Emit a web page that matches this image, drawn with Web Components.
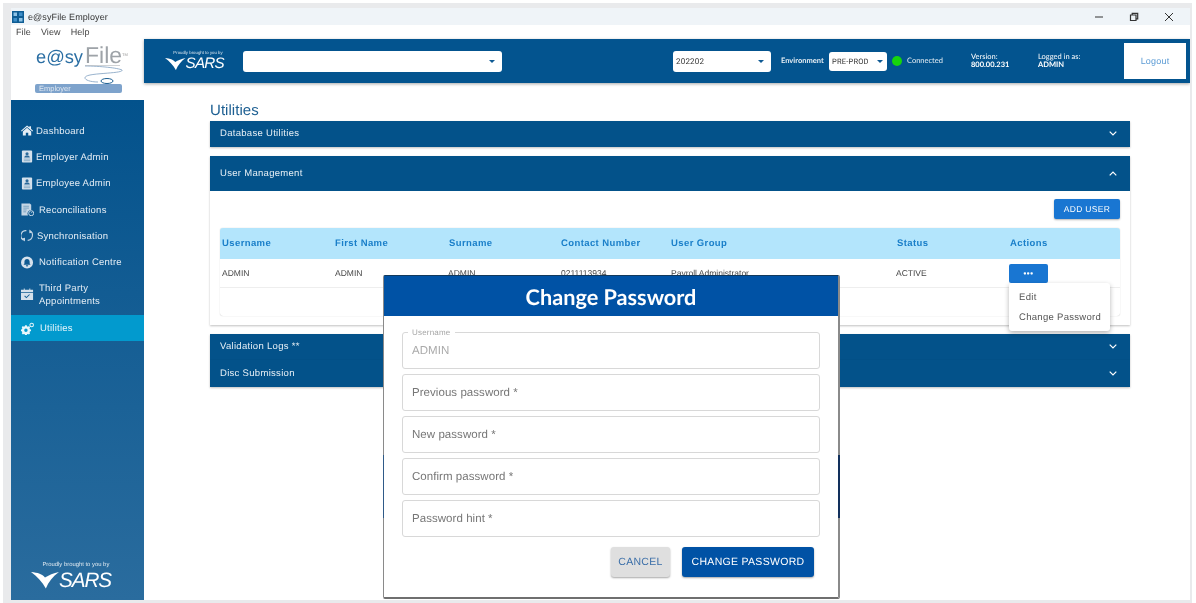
<!DOCTYPE html>
<html>
<head>
<meta charset="utf-8">
<title>e@syFile Employer</title>
<style>
    html, body { margin: 0; height: 603px; overflow: hidden; background: #fff; font-family: "Liberation Sans", Arial, sans-serif; text-rendering: geometricPrecision; }
</style>
</head>
<body>
<app-frame>
    <title-bar slot="title"></title-bar>
    <menu-bar slot="menu"></menu-bar>
    <app-logo slot="logo"></app-logo>
    <side-nav slot="nav">
        <nav-item icon="home" gap="2">Dashboard</nav-item>
        <nav-item icon="badge" gap="2">Employer Admin</nav-item>
        <nav-item icon="badge" gap="2">Employee Admin</nav-item>
        <nav-item icon="recon" gap="5">Reconciliations</nav-item>
        <nav-item icon="sync" gap="3">Synchronisation</nav-item>
        <nav-item icon="bell" gap="5">Notification Centre</nav-item>
        <nav-item icon="calendar" gap="5" tall>Third Party<br>Appointments</nav-item>
        <nav-item icon="gears" gap="6" active>Utilities</nav-item>
    </side-nav>
    <top-header slot="header"></top-header>
    <utilities-page slot="page"></utilities-page>
    <password-dialog slot="dialog"></password-dialog>
</app-frame>

<script>
const ICONS = {
    home: '<path d="M6.500 1 0 6.800l.7.8L6.500 2.600l5.800 5 .7-.8-2.200-2.100V1.800H9v1.300z"/><path d="M6.500 3.600 2 7.500V12h3.200V8.800h2.600V12H11V7.500z"/>',
    badge: '<rect x="1" y="0" width="11" height="13" rx="1" fill="#d5e1ec"/><circle cx="6.500" cy="3.500" r="1.700" fill="#2b6a9b"/><path d="M3.500 7.500c0-1.500 1.300-2.200 3-2.200s3 .7 3 2.200z" fill="#2b6a9b"/><path d="M3 9.300h7M3 11h7" stroke="#7fa6c4" stroke-width=".9"/>',
    recon: '<path d="M.5 0h9l1.500 1.500V7a4 4 0 0 0-3.500 6H.5z" fill="#c5d6e5"/><path d="M2.500 3h6M2.500 5h6M2.500 7h3.500M2.500 9h3" stroke="#6f9abb" stroke-width=".9"/><circle cx="11" cy="10.500" r="2.700" fill="none" stroke="currentColor" stroke-width=".9"/><path d="M11 10.500 12.200 9" stroke="currentColor" stroke-width=".8"/>',
    sync: '<g fill="none" stroke="#c5d6e5" stroke-width="1.200"><path d="M2.900 11.700A5.500 5.500 0 0 1 5.800 1.300"/><path d="M9.500 1.500A5.500 5.500 0 0 1 7.200 11.800"/></g><path d="M9 0v4l3.400-.7zM4.300 13V9L.9 9.700z" fill="#c5d6e5"/>',
    bell: '<path fill-rule="evenodd" d="M6.500 0a6.500 6.500 0 1 0 0 13 6.500 6.500 0 0 0 0-13zM6.500 2.800c1.700 0 2.800 1.300 2.800 3v1.700l1 1.300H2.700l1-1.300V5.800c0-1.700 1.100-3 2.800-3zM5.200 9.500h2.600a1.300 1.300 0 0 1-2.600 0z" fill="#d5e1ec"/>',
    calendar: '<path d="M3 0h1v1.500h5V0h1v1.500h3V4H0V1.500h3z" fill="#d5e1ec"/><path fill-rule="evenodd" d="M0 4.800h13V12.500H0zM3.500 8.300l.8-.7 1.500 1.500 3-3 .8.800-3.800 3.700z" fill="#d5e1ec"/>',
    gears: '<path fill-rule="evenodd" d="M4.400 4.400h1.800l.3 1.200 1 .4 1.100-.6 1.200 1.300-.6 1 .4 1 1.200.3v1.800l-1.200.3-.4 1 .6 1-1.200 1.300-1.100-.6-1 .4-.3 1.200H4.400l-.3-1.200-1-.4-1.100.6L.8 13.100l.6-1-.4-1-1-.3V9l1-.3.4-1-.6-1L2 5.400l1.100.6 1-.4zM5.300 8a1.800 1.800 0 1 0 0 3.700 1.800 1.800 0 0 0 0-3.700z" transform="translate(0 -1.500)"/><circle cx="11.500" cy="2.800" r="1.900" fill="none" stroke="currentColor" stroke-width="1.100"/>'
};

const CHEVRON_DOWN = '<svg width="8" height="5" viewBox="0 0 8 5"><path d="M.7.7 4 4l3.300-3.300" fill="none" stroke="#fff" stroke-width="1.200"/></svg>';
const CHEVRON_UP = '<svg width="8" height="5" viewBox="0 0 8 5"><path d="M.7 4.300 4 1l3.300 3.300" fill="none" stroke="#fff" stroke-width="1.200"/></svg>';

class AppFrame extends HTMLElement {
    constructor() {
        super();
        this.attachShadow({ mode: "open" }).innerHTML = `
            <style>
                :host {
                    display: block;
                    box-sizing: border-box;
                    height: 600px;
                    margin: 3px 4px 0 3px;
                    padding: 5px 2px 0 8px;
                    background: #e9eaec;
                    filter: blur(.3px);
                }
                .window {
                    position: relative;
                    height: 592px;
                    display: grid;
                    grid-template-columns: 133px 1fr;
                    grid-template-rows: 17px 13px 62px 1fr;
                    background: #fff;
                    overflow: hidden;
                }
                .wide { grid-column: 1 / 3; }
                .logo { grid-column: 1; grid-row: 3; }
                .nav { grid-column: 1; grid-row: 4; }
                .main { grid-column: 2; grid-row: 3 / 5; min-width: 0; display: flex; flex-direction: column; }
                ::slotted([slot="dialog"]) { position: absolute; left: 372px; top: 267px; }
            </style>
            <div class="window">
                <div class="wide"><slot name="title"></slot></div>
                <div class="wide"><slot name="menu"></slot></div>
                <div class="logo"><slot name="logo"></slot></div>
                <div class="nav"><slot name="nav"></slot></div>
                <div class="main">
                    <slot name="header"></slot>
                    <slot name="page"></slot>
                </div>
                <slot name="dialog"></slot>
            </div>
        `;
    }
}

class TitleBar extends HTMLElement {
    constructor() {
        super();
        this.attachShadow({ mode: "open" }).innerHTML = `
            <style>
                :host {
                    display: flex;
                    align-items: center;
                    height: 17px;
                    padding-left: 1px;
                    background: #eff4f8;
                    font: 9px "Liberation Sans", sans-serif;
                    color: #333;
                    letter-spacing: .1px;
                }
                svg { margin-right: 4px; }
                .controls { margin-left: auto; display: flex; gap: 25px; padding-right: 16px; align-items: center; }
            </style>
            <svg width="12" height="12" viewBox="0 0 12 12">
                <rect width="12" height="12" fill="#0f5d94"/>
                <rect x="1.500" y="1.500" width="3.500" height="3.500" fill="#8fc3e6"/>
                <rect x="7" y="1.500" width="3.500" height="3.500" fill="#3f8fca"/>
                <rect x="1.500" y="7" width="3.500" height="3.500" fill="#3f8fca"/>
                <rect x="7" y="7" width="3.500" height="3.500" fill="#8fc3e6"/>
            </svg>
            <span>e@syFile Employer</span>
            <div class="controls">
                <svg width="10" height="10" viewBox="0 0 10 10" style="margin:0"><path d="M1 5h8" stroke="#333" stroke-width="1"/></svg>
                <svg width="10" height="10" viewBox="0 0 10 10" style="margin:0"><path d="M1.500 3h5.500v5.500H1.500zM3.200 2.800V1.300h5.500v5.500H7" fill="none" stroke="#333" stroke-width="1.200"/></svg>
                <svg width="10" height="10" viewBox="0 0 10 10" style="margin:0"><path d="M1 1l8 8M9 1l-8 8" stroke="#333" stroke-width="1"/></svg>
            </div>
        `;
    }
}

class MenuBar extends HTMLElement {
    constructor() {
        super();
        this.attachShadow({ mode: "open" }).innerHTML = `
            <style>
                :host {
                    display: flex;
                    gap: 10px;
                    height: 13px;
                    padding-left: 5px;
                    align-items: center;
                    font: 9px "Liberation Sans", sans-serif;
                    color: #444;
                    letter-spacing: .1px;
                }
            </style>
            <span>File</span><span>View</span><span>Help</span>
        `;
    }
}

class SarsLogo extends HTMLElement {
    constructor() {
        super();
        const size = Number(this.getAttribute("size") || 16);
        this.attachShadow({ mode: "open" }).innerHTML = `
            <style>
                :host { display: inline-block; color: #fff; line-height: 1; text-align: left; }
                .by { font: ${size * .285}px "Liberation Sans", sans-serif; opacity: .85; display: block; white-space: nowrap; padding-left: ${size * .55}px; }
                .row { display: flex; align-items: center; margin-top: ${size * .05}px; }
                svg { width: ${size * 1.35}px; height: ${size * .8}px; flex: none; }
                .name { font: italic ${size}px "Liberation Sans", sans-serif; letter-spacing: ${size * -.05}px; }
            </style>
            <span class="by">Proudly brought to you by</span>
            <div class="row">
                <svg viewBox="0 0 32 15" preserveAspectRatio="none"><path d="M0 0C8 .5 13 2 16 5 20 3 26 1 32 0 25 4 20 9 17 15 13 9 7 4 0 0Z" fill="#fff"/></svg>
                <span class="name">SARS</span>
            </div>
        `;
    }
}

class AppLogo extends HTMLElement {
    constructor() {
        super();
        this.attachShadow({ mode: "open" }).innerHTML = `
            <style>
                :host {
                    display: block;
                    height: 62px;
                    padding: 7px 0 0 24px;
                    box-sizing: border-box;
                    font-family: "Liberation Sans", sans-serif;
                }
                .name { display: flex; align-items: baseline; height: 20px; line-height: 20px; padding-left: 1px; }
                .easy { font-size: 18.300px; color: #2a6ea3; }
                .file { font-size: 23px; color: #9ea3a8; margin-left: 2px; }
                .tm { font-size: 4px; color: #999; align-self: flex-start; }
                svg { display: block; margin: 0 0 -1px 45px; }
                .pill {
                    width: 87px;
                    height: 9px;
                    background: #7ea3cc;
                    border-radius: 2px;
                    font-size: 7.500px;
                    line-height: 10px;
                    color: #dfe7f0;
                    padding-left: 4px;
                    box-sizing: border-box;
                }
            </style>
            <div class="name"><span class="easy">e@sy</span><span class="file">File</span><span class="tm">TM</span></div>
            <svg width="48" height="20" viewBox="0 0 48 20" fill="none">
                <path d="M5 1C20 1 38 3 42 5 44 8 20 8 10 10 0 12 6 17 18 17" stroke="#7f9fc0" stroke-width=".8"/>
                <path d="M5 0H40" stroke="#a3a8ac" stroke-width="1"/>
                <ellipse cx="27" cy="16" rx="6" ry="2.500" stroke="#1d5f92" stroke-width="1"/>
            </svg>
            <div class="pill">Employer</div>
        `;
    }
}

class SideNav extends HTMLElement {
    constructor() {
        super();
        this.attachShadow({ mode: "open" }).innerHTML = `
            <style>
                :host {
                    display: flex;
                    flex-direction: column;
                    height: 500px;
                    box-sizing: border-box;
                    padding-top: 17.500px;
                    background: linear-gradient(#03528c, #2a6c9e);
                }
                .foot { margin-top: auto; padding: 0 0 6px 20px; }
            </style>
            <slot></slot>
            <div class="foot"><sars-logo size="20.700"></sars-logo></div>
        `;
    }
}

class NavItem extends HTMLElement {
    constructor() {
        super();
        const icon = ICONS[this.getAttribute("icon")];
        const gap = this.getAttribute("gap") || 4;
        this.attachShadow({ mode: "open" }).innerHTML = `
            <style>
                :host {
                    display: flex;
                    align-items: center;
                    gap: ${gap}px;
                    height: 26.300px;
                    padding-left: 10px;
                    color: #e4edf5;
                    font: 9.500px/13px "Liberation Sans", sans-serif;
                    letter-spacing: .25px;
                }
                :host([tall]) { height: 40px; padding-bottom: 2px; box-sizing: border-box; }
                :host([active]) { background: #029ace; color: #e8f6fb; height: 26px; }
                span { padding-top: 1px; }
                svg { width: 13px; height: 13px; fill: currentColor; flex: none; }
            </style>
            <svg viewBox="0 0 14 13">${icon}</svg>
            <span><slot></slot></span>
        `;
    }
}

class SelectBox extends HTMLElement {
    constructor() {
        super();
        this.attachShadow({ mode: "open" }).innerHTML = `
            <style>
                :host {
                    display: flex;
                    align-items: center;
                    justify-content: space-between;
                    box-sizing: border-box;
                    height: 21px;
                    padding: 0 7px 0 3px;
                    background: #fff;
                    border-radius: 3px;
                    color: #333;
                    font: 8px "Roboto", "Liberation Sans", sans-serif;
                    letter-spacing: .2px;
                }
                i { width: 0; height: 0; border: 3px solid transparent; border-top: 3px solid #0f5a94; border-bottom: 0; }
            </style>
            <span><slot></slot></span><i></i>
        `;
    }
}

class TopHeader extends HTMLElement {
    constructor() {
        super();
        this.attachShadow({ mode: "open" }).innerHTML = `
            <style>
                :host {
                    display: flex;
                    align-items: center;
                    height: 44px;
                    margin-top: 1px;
                    flex: none;
                    background: #03548f;
                    color: #fff;
                    box-shadow: 0 1px 3px rgba(0,0,0,.35);
                    font: 7.500px/8px "Lato", "Liberation Sans", sans-serif;
                    position: relative;
                }
                sars-logo { margin-left: 21px; width: 58px; flex: none; }
                .search { width: 259px; margin-left: 20px; }
                .period { width: 98px; margin-left: 171px; }
                .env { margin-left: 10px; font-weight: bold; opacity: .9; width: 44px; white-space: nowrap; }
                .envsel { width: 58px; height: 19px; margin-left: 4px; font-size: 7.500px; padding-right: 4px; }
                .dot { width: 10px; height: 10px; border-radius: 50%; background: #17d40c; margin-left: 5px; }
                .conn { margin-left: 5px; opacity: .9; width: 35px; white-space: nowrap; }
                .ver { margin-left: 29px; width: 67px; }
                .who { width: 86px; }
                b { display: block; }
                .logout {
                    width: 62px;
                    height: 36px;
                    background: #fff;
                    color: #5b9bd5;
                    font: 9px/36px "Liberation Sans", sans-serif;
                    text-align: center;
                    letter-spacing: .2px;
                }
            </style>
            <sars-logo size="15.200"></sars-logo>
            <select-box class="search"></select-box>
            <select-box class="period">202202</select-box>
            <span class="env">Environment</span>
            <select-box class="envsel">PRE-PROD</select-box>
            <span class="dot"></span>
            <span class="conn">Connected</span>
            <div class="ver">Version:<b>800.00.231</b></div>
            <div class="who">Logged in as:<b>ADMIN</b></div>
            <div class="logout">Logout</div>
        `;
    }
}

class AccordionPanel extends HTMLElement {
    constructor() {
        super();
        const height = this.getAttribute("height") || 26;
        const open = this.hasAttribute("open");
        this.attachShadow({ mode: "open" }).innerHTML = `
            <style>
                :host {
                    display: block;
                    box-shadow: 0 1px 2px rgba(0,0,0,.25);
                    background: #fff;
                }
                .head {
                    display: flex;
                    align-items: center;
                    justify-content: space-between;
                    height: ${height}px;
                    padding: 0 13px 1px 10px;
                    box-sizing: border-box;
                    background: #03528a;
                    color: #e8f0f6;
                    font: 9.500px "Liberation Sans", sans-serif;
                    letter-spacing: .3px;
                }
            </style>
            <div class="head"><span>${this.getAttribute("title")}</span>${open ? CHEVRON_UP : CHEVRON_DOWN}</div>
            <slot></slot>
        `;
    }
}

class ActionMenu extends HTMLElement {
    constructor() {
        super();
        this.attachShadow({ mode: "open" }).innerHTML = `
            <style>
                :host { display: block; position: relative; width: 39px; height: 19px; margin-left: -1px; }
                .btn {
                    height: 19px;
                    background: #1976d2;
                    border-radius: 2px;
                    color: #fff;
                    font: bold 8px/19px "Liberation Sans", sans-serif;
                    text-align: center;
                    letter-spacing: .5px;
                }
                .menu {
                    position: absolute;
                    left: 0;
                    top: 19px;
                    width: 101px;
                    height: 48px;
                    box-sizing: border-box;
                    padding-top: 5px;
                    background: #fff;
                    border-radius: 3px;
                    box-shadow: 0 2px 5px rgba(0,0,0,.3);
                    color: #555;
                    font: 9.500px/20px "Liberation Sans", sans-serif;
                    letter-spacing: .3px;
                    z-index: 2;
                }
                .menu div { padding-left: 10px; white-space: nowrap; }
            </style>
            <div class="btn">•••</div>
            <div class="menu"><div>Edit</div><div>Change Password</div></div>
        `;
    }
}

class UserTable extends HTMLElement {
    constructor() {
        super();
        this.attachShadow({ mode: "open" }).innerHTML = `
            <style>
                :host {
                    display: block;
                    border-radius: 3px;
                    box-shadow: 0 0 1px rgba(0,0,0,.3);
                    font-family: "Liberation Sans", sans-serif;
                }
                .row {
                    display: grid;
                    grid-template-columns: 113px 114px 112px 110px 226px 113px 1fr;
                    align-items: center;
                    padding-left: 2px;
                }
                .head {
                    height: 31px;
                    background: #b3e5fc;
                    color: #1a7fc9;
                    font-size: 9.500px;
                    font-weight: bold;
                    letter-spacing: .4px;
                    border-radius: 3px 3px 0 0;
                }
                .body { height: 28px; color: #444; font-size: 8.500px; border-bottom: 1px solid #eee; }
                .body span:nth-child(3), .body span:nth-child(6) { margin-left: -1px; }
                .empty { height: 28px; }
            </style>
            <div class="row head">
                <span>Username</span><span>First Name</span><span>Surname</span><span>Contact Number</span><span>User Group</span><span>Status</span><span>Actions</span>
            </div>
            <div class="row body">
                <span>ADMIN</span><span>ADMIN</span><span>ADMIN</span><span>0211113934</span><span>Payroll Administrator</span><span>ACTIVE</span><action-menu></action-menu>
            </div>
            <div class="empty"></div>
        `;
    }
}

class UtilitiesPage extends HTMLElement {
    constructor() {
        super();
        this.attachShadow({ mode: "open" }).innerHTML = `
            <style>
                :host {
                    display: block;
                    padding: 19px 60px 0 66px;
                    font-family: "Liberation Sans", sans-serif;
                }
                h1 { margin: 0; height: 19px; font-size: 15px; line-height: 17px; font-weight: normal; color: #1d5f92; letter-spacing: .05px; }
                .gap { height: 9px; }
                .users { padding: 8px 10px 9px; height: 134px; box-sizing: border-box; }
                .add {
                    width: 66px;
                    height: 20px;
                    margin: 0 0 9px auto;
                    background: #1976d2;
                    border-radius: 2px;
                    color: #fff;
                    font-size: 8.500px;
                    line-height: 20px;
                    text-align: center;
                    letter-spacing: .3px;
                    box-shadow: 0 1px 2px rgba(0,0,0,.3);
                }
            </style>
            <h1>Utilities</h1>
            <accordion-panel title="Database Utilities"></accordion-panel>
            <div class="gap"></div>
            <accordion-panel title="User Management" height="35" open>
                <div class="users">
                    <div class="add">ADD USER</div>
                    <user-table></user-table>
                </div>
            </accordion-panel>
            <div class="gap"></div>
            <accordion-panel title="Validation Logs **"></accordion-panel>
            <accordion-panel title="Disc Submission" height="27"></accordion-panel>
        `;
    }
}

class OutlinedField extends HTMLElement {
    constructor() {
        super();
        const legend = this.getAttribute("legend");
        this.attachShadow({ mode: "open" }).innerHTML = `
            <style>
                :host {
                    display: block;
                    position: relative;
                    box-sizing: border-box;
                    height: 37px;
                    padding: 0 9px;
                    border: 1px solid #d8d8d8;
                    border-radius: 3px;
                    font: 11.500px/37px "Liberation Sans", sans-serif;
                    letter-spacing: .05px;
                    color: #777;
                }
                :host([legend]) { color: #aaa; }
                .legend {
                    position: absolute;
                    left: 5px;
                    top: -6px;
                    padding: 0 4px;
                    background: #fff;
                    color: #a5a5a5;
                    font-size: 8px;
                    line-height: 11px;
                    letter-spacing: .2px;
                }
            </style>
            ${legend ? `<span class="legend">${legend}</span>` : ""}
            <slot></slot>
        `;
    }
}

class PasswordDialog extends HTMLElement {
    constructor() {
        super();
        this.attachShadow({ mode: "open" }).innerHTML = `
            <style>
                :host {
                    display: block;
                    box-sizing: border-box;
                    width: 457px;
                    height: 324px;
                    background: #fff;
                    border: 1px solid #8a8a8a;
                    border-right-width: 2px;
                    border-bottom: 2px solid #6f6f6f;
                    border-top-color: #12395c;
                    border-radius: 2px;
                    font-family: "Liberation Sans", sans-serif;
                }
                .strip { position: absolute; top: 179px; height: 63px; }
                .strip.l { left: -1px; width: 1px; background: #2f5a88; }
                .strip.r { right: -2px; width: 2px; background: #12305c; }
                h2 {
                    margin: 0;
                    height: 40px;
                    background: #0052a5;
                    color: #fff;
                    font: bold 21.700px/42px "Lato", sans-serif;
                    text-align: center;
                }
                .fields { display: flex; flex-direction: column; gap: 5px; padding: 16px 18px 0 18px; }
                .actions { display: flex; justify-content: flex-end; gap: 12px; padding: 10px 24px 0 0; }
                .btn {
                    height: 30px;
                    border-radius: 3px;
                    font-size: 10.500px;
                    line-height: 30px;
                    letter-spacing: .3px;
                    text-align: center;
                    box-shadow: 0 1px 2px rgba(0,0,0,.35);
                }
                .cancel { width: 59px; background: #dfdfdf; color: #3a6ea8; }
                .save { width: 132px; background: #0052a5; color: #fff; }
            </style>
            <div class="strip l"></div><div class="strip r"></div>
            <h2>Change Password</h2>
            <div class="fields">
                <outlined-field legend="Username">ADMIN</outlined-field>
                <outlined-field>Previous password *</outlined-field>
                <outlined-field>New password *</outlined-field>
                <outlined-field>Confirm password *</outlined-field>
                <outlined-field>Password hint *</outlined-field>
            </div>
            <div class="actions">
                <div class="btn cancel">CANCEL</div>
                <div class="btn save">CHANGE PASSWORD</div>
            </div>
        `;
    }
}

customElements.define('sars-logo', SarsLogo);
customElements.define('select-box', SelectBox);
customElements.define('nav-item', NavItem);
customElements.define('side-nav', SideNav);
customElements.define('app-logo', AppLogo);
customElements.define('title-bar', TitleBar);
customElements.define('menu-bar', MenuBar);
customElements.define('top-header', TopHeader);
customElements.define('accordion-panel', AccordionPanel);
customElements.define('action-menu', ActionMenu);
customElements.define('user-table', UserTable);
customElements.define('utilities-page', UtilitiesPage);
customElements.define('outlined-field', OutlinedField);
customElements.define('password-dialog', PasswordDialog);
customElements.define('app-frame', AppFrame);
</script>
</body>
</html>
